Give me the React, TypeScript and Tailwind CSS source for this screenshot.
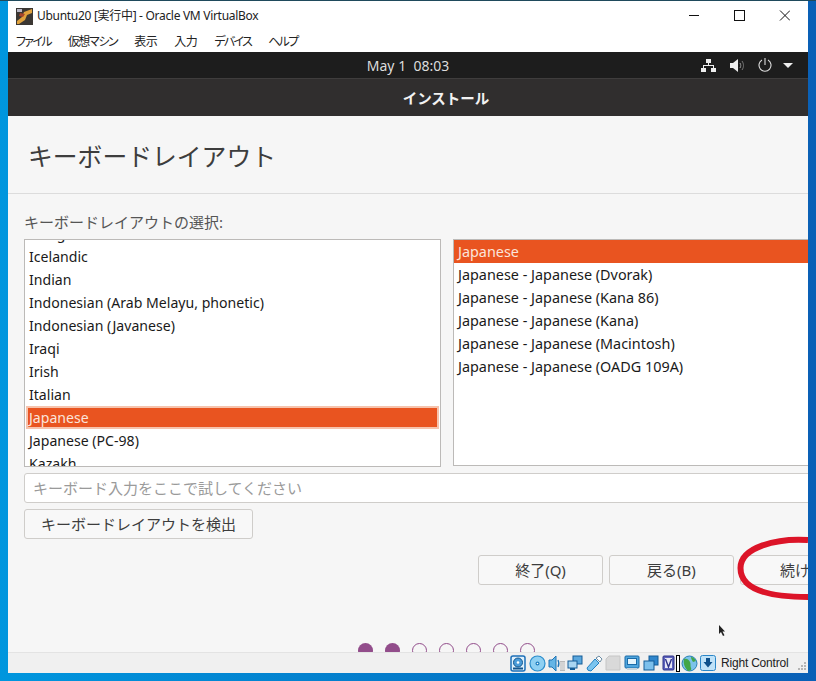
import React from "react";

const ubuntu = "font-['Noto_Sans','Noto_Sans_CJK_JP',sans-serif]";
const leftRows = [
  "Icelandic",
  "Indian",
  "Indonesian (Arab Melayu, phonetic)",
  "Indonesian (Javanese)",
  "Iraqi",
  "Irish",
  "Italian",
  "Japanese",
  "Japanese (PC-98)",
  "Kazakh",
];
const rightRows = [
  "Japanese",
  "Japanese - Japanese (Dvorak)",
  "Japanese - Japanese (Kana 86)",
  "Japanese - Japanese (Kana)",
  "Japanese - Japanese (Macintosh)",
  "Japanese - Japanese (OADG 109A)",
];
const menus = [
  { label: "ファイル", className: "tracking-[-1.7px]" },
  { label: "仮想マシン", className: "tracking-[-1.4px]" },
  { label: "表示", className: "tracking-[-0.5px]" },
  { label: "入力", className: "tracking-[-0.5px]" },
  { label: "デバイス", className: "tracking-[-1.7px]" },
  { label: "ヘルプ", className: "tracking-[-1.6px]" },
];

function VBoxLogo() {
  return (
    <svg width="17" height="17" viewBox="0 0 17 17">
      <rect width="17" height="17" fill="#3b3733" />
      <path d="M1 13 L6 9 L8 4 L16 1 L16 5 L11 7 L9 12 L3 16 L1 16 Z" fill="#e0a23c" />
      <path d="M4 5 L9 6 L7 9 L3 8 Z" fill="#a8452a" />
      <rect x="1" y="1" width="5" height="3" fill="#b9b6c4" />
    </svg>
  );
}

function NetworkTray() {
  return (
    <svg width="15" height="13" viewBox="0 0 15 13" fill="#eee">
      <rect x="5" y="0" width="5" height="4" />
      <rect x="0" y="9" width="5" height="4" />
      <rect x="10" y="9" width="5" height="4" />
      <path d="M7 4h1v2h5v3h-1V7H3v2H2V6h5z" />
    </svg>
  );
}

function SpeakerTray() {
  return (
    <svg width="15" height="13" viewBox="0 0 15 13" fill="none">
      <path d="M0 4h3l5-4v13L3 9H0z" fill="#eee" />
      <path d="M10 4c1 2 1 3 0 5" stroke="#999" />
      <path d="M12 2c2 3 2 6 0 9" stroke="#777" />
    </svg>
  );
}

function PowerTray() {
  return (
    <svg width="14" height="14" viewBox="0 0 14 14" fill="none" stroke="#ddd" strokeWidth="1.100">
      <path d="M4 2a6 6 0 1 0 6 0" />
      <path d="M7 0v7" />
    </svg>
  );
}

function DiskIcon() {
  return (
    <svg width="16" height="17" viewBox="0 0 16 17">
      <rect x="1" y="1" width="14" height="15" rx="2" fill="#dff0fb" stroke="#1d6fb8" strokeWidth="1.500" />
      <circle cx="8" cy="7.500" r="4.500" fill="#4a9bd8" stroke="#14578f" />
      <circle cx="8" cy="7.500" r="1.300" fill="#fff" />
      <rect x="3" y="12.500" width="10" height="2" fill="#14578f" />
    </svg>
  );
}

function CdIcon() {
  return (
    <svg width="17" height="17" viewBox="0 0 17 17">
      <circle cx="8.500" cy="8.500" r="7.500" fill="#8fd0f2" stroke="#2a8ccb" strokeWidth="1.200" />
      <circle cx="8.500" cy="8.500" r="2" fill="#1f7dbe" />
      <circle cx="8.500" cy="8.500" r="0.800" fill="#fff" />
    </svg>
  );
}

function AudioIcon() {
  return (
    <svg width="18" height="17" viewBox="0 0 18 17">
      <path d="M1 5h3l4-4v15l-4-4H1z" fill="#65b5e6" stroke="#1f74b5" />
      <path d="M10 5c1 2 1 5 0 7" stroke="#1f74b5" fill="none" strokeWidth="1.300" />
      <rect x="12" y="6" width="5" height="10" fill="#b9b9b9" />
      <path d="M12 8h5M12 10h5M12 12h5M12 14h5" stroke="#eee" />
    </svg>
  );
}

function NetIcon() {
  return (
    <svg width="16" height="16" viewBox="0 0 16 16">
      <rect x="6" y="1" width="9" height="8" fill="#5aa7dd" stroke="#155d97" />
      <rect x="1" y="6" width="9" height="7" fill="#a9d6f2" stroke="#155d97" />
      <rect x="3" y="13" width="5" height="2" fill="#155d97" />
    </svg>
  );
}

function UsbIcon() {
  return (
    <svg width="17" height="17" viewBox="0 0 17 17">
      <path d="M1 13 L9 4 L13 8 L5 16 Q1 16 1 13 Z" fill="#7cc4ee" stroke="#2280c2" />
      <path d="M10 3 L13 1 L16 4 L14 7 Z" fill="#fff" stroke="#6a8ba3" />
    </svg>
  );
}

function FolderIcon() {
  return (
    <svg width="16" height="16" viewBox="0 0 16 16">
      <path d="M1 4l3-3h11v14H1z" fill="#d9d9d9" stroke="#c6c6c6" />
    </svg>
  );
}

function ScreenIcon() {
  return (
    <svg width="16" height="16" viewBox="0 0 16 16">
      <rect x="1" y="1" width="14" height="12" rx="1" fill="#4fa5dd" stroke="#1a6ba8" />
      <rect x="3.500" y="3.500" width="9" height="6" fill="#e5f4fc" stroke="#1a6ba8" />
      <rect x="3" y="13" width="10" height="2" fill="#c8d4dc" />
    </svg>
  );
}

function WindowsIcon() {
  return (
    <svg width="16" height="16" viewBox="0 0 16 16">
      <rect x="6" y="1" width="9" height="9" fill="#2f86cc" stroke="#155d97" />
      <rect x="1" y="6" width="10" height="9" fill="#7cc0ec" stroke="#155d97" />
    </svg>
  );
}

function ChipIcon() {
  return (
    <svg width="13" height="16" viewBox="0 0 13 16">
      <rect x="1" y="1" width="11" height="14" rx="1" fill="#5d63bd" stroke="#2e3388" />
      <rect x="3" y="3" width="7" height="10" fill="#e8e8f6" />
      <path d="M3.500 4l3 8 3-8" fill="none" stroke="#2e3388" strokeWidth="1.400" />
    </svg>
  );
}

function GlobeIcon() {
  return (
    <svg width="17" height="17" viewBox="0 0 17 17">
      <circle cx="8.500" cy="8.500" r="7.500" fill="#7cc3ea" stroke="#2a7fb5" />
      <path d="M3 4c3-1 5 1 6 3s0 4 1 6-1 3-3 3C4 13 2 9 3 4z" fill="#43a648" />
      <path d="M10 2c2 0 4 2 5 4l-3 1c-1-2-2-3-2-5z" fill="#43a648" />
    </svg>
  );
}

function ArrowIcon() {
  return (
    <svg width="16" height="16" viewBox="0 0 16 16">
      <rect x="0.500" y="0.500" width="15" height="15" rx="2" fill="#bfe2f8" stroke="#2a86c8" />
      <path d="M6 3h4v4h2.500L8 12.500 3.500 7H6z" fill="#0d4f8b" />
    </svg>
  );
}

function ListRow({ label, className }: { label: string; className: string }) {
  return <div className={"flex h-[23px] items-center " + className}>{label}</div>;
}

function Button({ label, className }: { label: string; className: string }) {
  return (
    <div
      className={
        "flex h-[30px] shrink-0 items-center justify-center rounded-[3px] border border-[#cfcdca] bg-[#f8f8f8] text-[15px] text-[#3d3d3d] " +
        className
      }
    >
      {label}
    </div>
  );
}

function StatusSlot({ children }: { children: React.ReactNode }) {
  return <div className="flex w-[19px] shrink-0 items-center">{children}</div>;
}

export default function App() {
  return (
    <div className="flex h-[681px] w-[816px] flex-col overflow-hidden bg-gradient-to-r from-[#0096de] to-[#0a60b6]">
      <div className="h-px shrink-0 bg-[#1f4a5c]" />
      <div className="relative mx-2 flex h-[672px] w-[800px] flex-col overflow-hidden bg-white">
        {/* Title bar */}
        <div className="flex h-[28px] shrink-0 items-center bg-white pl-2 pt-[2px] font-['Noto_Sans','Noto_Sans_CJK_JP',sans-serif] text-[12px] text-[#222]">
          <VBoxLogo />
          <span className="ml-[4px] [font-feature-settings:'palt'] tracking-[-0.3px]">
            Ubuntu20 [実行中] - Oracle VM VirtualBox
          </span>
          <svg className="ml-auto mr-[18px]" width="101" height="12" viewBox="0 0 101 12" fill="none" stroke="#111">
            <path d="M0 5.500h10" />
            <rect x="45.500" y="0.500" width="10" height="10" />
            <path d="M91 0.500l10 10M101 0.500l-10 10" />
          </svg>
        </div>

        {/* Menu bar */}
        <div className="flex h-[23px] shrink-0 items-center gap-[17px] bg-white pl-2 font-['Noto_Sans_CJK_JP',sans-serif] text-[12px] text-[#222] [font-feature-settings:'palt']">
          {menus.map((m) => (
            <span key={m.label} className={m.className}>
              {m.label}
            </span>
          ))}
        </div>

        {/* GNOME top bar */}
        <div className="relative flex h-[27px] shrink-0 items-center justify-center border-b border-[#3f3d3d] bg-[#1d1d1d] font-['Noto_Sans',sans-serif] text-[14px] text-[#dcdcdc]">
          <span className="whitespace-pre">May 1  08:03</span>
          <div className="absolute right-[15px] top-[6px] flex items-center">
            <NetworkTray />
            <div className="ml-[14px]">
              <SpeakerTray />
            </div>
            <div className="ml-[13px]">
              <PowerTray />
            </div>
            <div className="ml-[11px] h-0 w-0 border-x-[5px] border-t-[5px] border-x-transparent border-t-[#eee]" />
          </div>
        </div>

        {/* Header bar, centred on the guest width which runs past the window */}
        <div className="flex h-[37px] w-[876px] shrink-0 items-center justify-center bg-[#302e2e] font-['Noto_Sans_CJK_JP',sans-serif] text-[14.500px] font-bold text-[#f2f2f2]">
          インストール
        </div>

        {/* Installer page */}
        <div className={"relative flex min-h-0 flex-1 flex-col overflow-hidden bg-[#f6f6f6] " + ubuntu}>
          <div className="flex h-[78px] shrink-0 items-center border-b border-[#dcdcdc] pl-[20px] pt-[4px] text-[24.800px] text-[#3d3d3d]">
            キーボードレイアウト
          </div>
          <div className="flex w-[876px] flex-col pl-4">
            <div className="mt-[18px] text-[15px] leading-[20px] text-[#555]">キーボードレイアウトの選択:</div>
            <div className="mt-[7px] flex gap-3">
              <div className="h-[228px] w-[417px] overflow-hidden border border-[#bcbab8] bg-white text-[14.100px]">
                <div className="-mt-[18px] px-[1px]">
                  <ListRow label="Hungarian" className="pl-[3px] text-[#1a1a1a]" />
                  {leftRows.map((r) => (
                    <ListRow
                      key={r}
                      label={r}
                      className={
                        r === "Japanese"
                          ? "border-2 border-[#f6c3ad] bg-[#e95420] pl-[1px] text-[#fbe4da]"
                          : "pl-[3px] text-[#1a1a1a]"
                      }
                    />
                  ))}
                </div>
              </div>
              <div className="h-[227px] flex-1 overflow-hidden border border-[#bcbab8] bg-white text-[14.400px]">
                {rightRows.map((r, i) => (
                  <ListRow
                    key={r}
                    label={r}
                    className={i === 0 ? "bg-[#e95420] pl-[4px] text-[#fbe4da]" : "pl-[4px] text-[#1a1a1a]"}
                  />
                ))}
              </div>
            </div>
            <div className="mt-[6px] flex h-[30px] items-center rounded-[3px] border border-[#cfcdca] bg-white pl-[8px] text-[15px] text-[#9a9a9a]">
              キーボード入力をここで試してください
            </div>
            <Button label="キーボードレイアウトを検出" className="mt-[6px] w-[229px]" />
            <div className="mt-[16px] flex gap-[6px] pl-[454px]">
              <Button label="終了(Q)" className="w-[125px]" />
              <Button label="戻る(B)" className="w-[125px]" />
              <Button label="続ける" className="w-[125px]" />
            </div>
            <div className="mt-[58px] flex gap-[12px] pl-[334px]">
              {[0, 1, 2, 3, 4, 5, 6].map((i) => (
                <div
                  key={i}
                  className={
                    i < 2
                      ? "h-[15px] w-[15px] rounded-full bg-[#924d8b]"
                      : "h-[15px] w-[15px] rounded-full border border-[#924d8b]"
                  }
                />
              ))}
            </div>
          </div>
          {/* hand-drawn mark and mouse pointer lie over the page */}
          <svg className="absolute left-[729px] top-[419px]" width="71" height="68" viewBox="0 0 71 68" fill="none">
            <path d="M71 5C40 3 3.500 12 3.500 33C3.500 52 25 62 71 62" stroke="#dc1428" strokeWidth="6" />
          </svg>
          <svg className="absolute left-[710px] top-[509px]" width="8" height="12" viewBox="0 0 8 12">
            <path d="M1 0v9l2-2 2 4 1.500-.7-2-3.800H7z" fill="#222" />
          </svg>
        </div>

        {/* VirtualBox status bar */}
        <div className="flex h-[21px] shrink-0 items-center border-t border-[#e3e3e3] bg-[#f0f0f0] pl-[502px]">
          <StatusSlot>
            <DiskIcon />
          </StatusSlot>
          <StatusSlot>
            <CdIcon />
          </StatusSlot>
          <StatusSlot>
            <AudioIcon />
          </StatusSlot>
          <StatusSlot>
            <NetIcon />
          </StatusSlot>
          <StatusSlot>
            <UsbIcon />
          </StatusSlot>
          <StatusSlot>
            <FolderIcon />
          </StatusSlot>
          <StatusSlot>
            <ScreenIcon />
          </StatusSlot>
          <StatusSlot>
            <WindowsIcon />
          </StatusSlot>
          <StatusSlot>
            <ChipIcon />
            <div className="ml-[1px] h-[17px] w-[4px] shrink-0 border border-black bg-white" />
          </StatusSlot>
          <StatusSlot>
            <GlobeIcon />
          </StatusSlot>
          <StatusSlot>
            <ArrowIcon />
          </StatusSlot>
          <span className="ml-[2px] whitespace-nowrap font-['Liberation_Sans',sans-serif] text-[12px] tracking-[-0.2px] text-[#222]">
            Right Control
          </span>
          <svg className="ml-[10px] mt-[6px] shrink-0" width="9" height="9" viewBox="0 0 9 9" fill="#b5b5b5">
            <rect x="6" y="0" width="2" height="2" />
            <rect x="3" y="3" width="2" height="2" />
            <rect x="6" y="3" width="2" height="2" />
            <rect x="0" y="6" width="2" height="2" />
            <rect x="3" y="6" width="2" height="2" />
            <rect x="6" y="6" width="2" height="2" />
          </svg>
        </div>
      </div>
    </div>
  );
}
